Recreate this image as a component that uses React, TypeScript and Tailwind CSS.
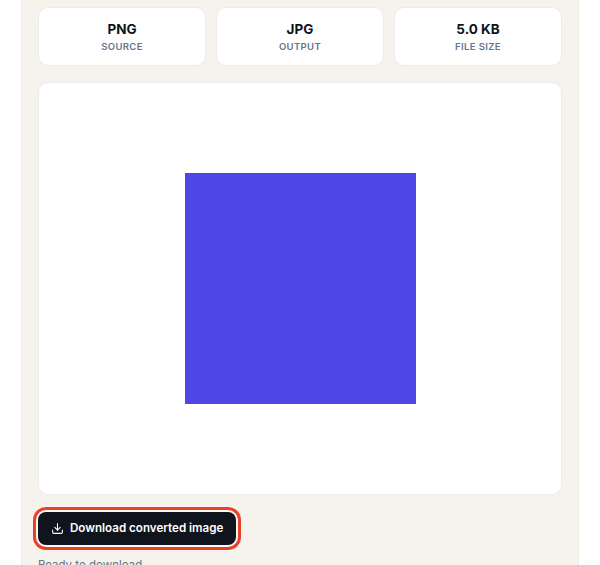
import { Download } from "lucide-react";

const StatCard = ({ value, label }: { value: string; label: string }) => {
  return (
    <div className="flex h-[59px] flex-col items-center justify-center rounded-[10px] border border-[#ebebf0] bg-white">
      <div className="text-[13.5px] leading-5 font-bold text-[#0f141c]">{value}</div>
      <div className="text-[9.5px] leading-4 font-semibold tracking-[0.04em] text-[#64748b]">{label}</div>
    </div>
  );
};

const App = () => {
  return (
    <div className="h-[565px] overflow-hidden bg-white font-['Inter','Noto_Sans',sans-serif]">
      <div className="mx-[21px] h-[600px] border-x border-[#ecebe6] bg-[#f6f3ec] px-4 pt-[7px]">
        <div className="grid grid-cols-3 gap-[10px]">
          <StatCard value="PNG" label="SOURCE" />
          <StatCard value="JPG" label="OUTPUT" />
          <StatCard value="5.0 KB" label="FILE SIZE" />
        </div>

        <div className="mt-4 flex h-[413px] items-center justify-center rounded-[10px] border border-[#ebebf0] bg-white">
          <div className="h-[231px] w-[231px] bg-[#4f46e5]" />
        </div>

        <button className="mt-[17px] flex h-[33px] w-[198px] items-center gap-[6px] rounded-lg bg-[#10141c] pl-[13px] text-[11.6px] font-semibold text-white shadow-[0_0_0_2px_#fbfaf8,0_0_0_5px_#ea4029]">
          <Download size={13} />
          Download converted image
        </button>

        <p className="mt-[10px] text-[11.5px] leading-5 text-[#64748b]">Ready to download</p>
      </div>
    </div>
  );
};

export default App;
